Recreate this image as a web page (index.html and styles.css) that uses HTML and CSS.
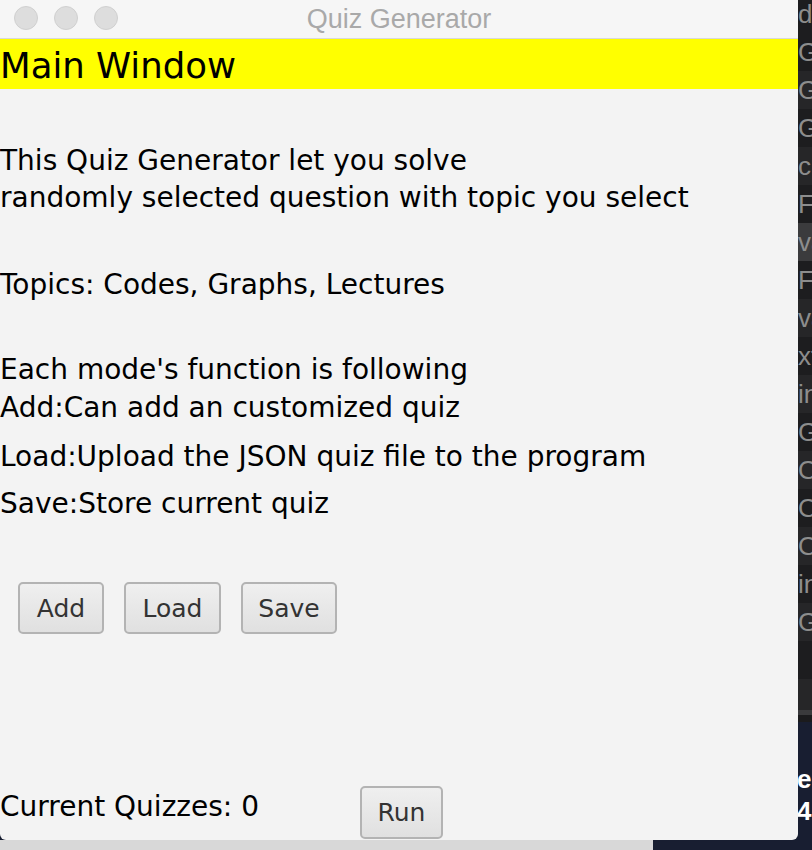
FILE: index.html
```html
<!DOCTYPE html>
<html>
<head>
<meta charset="utf-8">
<link rel="stylesheet" href="styles.css">
</head>
<body>
<div class="screen">
  <div class="left">
    <div class="window">
      <div class="titlebar">
        <div class="lights">
          <span class="light"></span><span class="light"></span><span class="light"></span>
        </div>
        <div class="title">Quiz Generator</div>
      </div>
      <div class="header">Main Window</div>
      <div class="content">
        <p class="intro">This Quiz Generator let you solve<br>randomly selected question with topic you select</p>
        <p class="topics">Topics: Codes, Graphs, Lectures</p>
        <p class="each">Each mode's function is following</p>
        <p class="mode m-add">Add:Can add an customized quiz</p>
        <p class="mode m-load">Load:Upload the JSON quiz file to the program</p>
        <p class="mode m-save">Save:Store current quiz</p>
        <div class="buttons">
          <button class="btn b-add">Add</button>
          <button class="btn b-load">Load</button>
          <button class="btn b-save">Save</button>
        </div>
        <div class="footer">
          <span class="count">Current Quizzes: 0</span>
          <button class="btn b-run">Run</button>
        </div>
      </div>
    </div>
    <div class="under"></div>
  </div>
  <div class="strip">
    <div class="rows">
      <div class="row">d</div>
      <div class="row">G</div>
      <div class="row alt">G</div>
      <div class="row">G</div>
      <div class="row alt">cı</div>
      <div class="row">F</div>
      <div class="row hl">va</div>
      <div class="row">F</div>
      <div class="row alt">va</div>
      <div class="row">xt</div>
      <div class="row alt">in</div>
      <div class="row">G</div>
      <div class="row alt">O</div>
      <div class="row">O</div>
      <div class="row alt">O</div>
      <div class="row">in</div>
      <div class="row alt">G</div>
      <div class="row"></div>
      <div class="row alt last"></div>
    </div>
    <div class="divider"></div>
    <div class="divider2"></div>
    <div class="desk">
      <div class="desk-t1">e</div>
      <div class="desk-t2">4.</div>
    </div>
  </div>
</div>
</body>
</html>
```
FILE: styles.css
```css
html, body {
  margin: 0;
  padding: 0;
}
body {
  width: 812px;
  height: 850px;
  overflow: hidden;
  background: #181e31;
}
.screen {
  display: flex;
  width: 812px;
  height: 850px;
}
.left {
  width: 798px;
  display: flex;
  flex-direction: column;
}
.window {
  width: 798px;
  height: 840px;
  background: #f3f3f3;
  border-radius: 0 0 6px 6px;
  display: flex;
  flex-direction: column;
  overflow: hidden;
  font-family: "DejaVu Sans", sans-serif;
  color: #000;
}
.titlebar {
  height: 38px;
  background: #f6f6f6;
  border-bottom: 1px solid #d8d8d8;
  display: flex;
  align-items: center;
  position: relative;
}
.lights {
  display: flex;
  gap: 16px;
  padding-left: 14px;
  margin-top: -2px;
}
.light {
  width: 24px;
  height: 24px;
  border-radius: 50%;
  background: #dddddd;
  border: 1px solid #d0d0d0;
  box-sizing: border-box;
}
.title {
  position: absolute;
  left: 0;
  right: 0;
  top: 0;
  bottom: 0;
  display: flex;
  align-items: center;
  justify-content: center;
  font-family: "Liberation Sans", sans-serif;
  font-size: 27px;
  color: #a9a9a9;
}
.header {
  height: 50px;
  background: #ffff00;
  font-size: 35.5px;
  line-height: 54px;
  white-space: nowrap;
}
.content {
  flex: 1;
  display: flex;
  flex-direction: column;
  font-size: 28px;
  line-height: 37px;
}
.content p {
  margin: 0;
  white-space: nowrap;
}
.content .intro { margin-top: 53px; }
.content .topics { margin-top: 50px; }
.content .each { margin-top: 48px; }
.content .m-add { margin-top: 1px; }
.content .m-load { margin-top: 12px; }
.content .m-save { margin-top: 10px; }
.buttons {
  display: flex;
  gap: 20px;
  margin-top: 60px;
  padding-left: 18px;
}
.btn {
  height: 52px;
  border: 2px solid #b3b3b3;
  border-radius: 5px;
  background: linear-gradient(#efefef, #e0e0e0);
  font-family: "DejaVu Sans", sans-serif;
  font-size: 25px;
  color: #333;
  padding: 0;
  box-sizing: border-box;
}
.b-add { width: 86px; }
.b-load { width: 97px; }
.b-save { width: 96px; }
.b-run { width: 83px; height: 53px; }
.footer {
  margin-top: auto;
  display: flex;
  align-items: center;
  padding-bottom: 1px;
}
.count {
  width: 360px;
  margin-bottom: 12px;
}
.under {
  width: 653px;
  flex: 1;
  background: #d8d8d8;
}
.strip {
  width: 14px;
  display: flex;
  flex-direction: column;
  overflow: hidden;
  font-family: "Liberation Sans", sans-serif;
}
.rows {
  margin-top: -5px;
}
.row {
  height: 38px;
  line-height: 38px;
  background: #1d1d1f;
  color: #8d8d8d;
  font-size: 26px;
  white-space: nowrap;
}
.row.alt { background: #262628; }
.row.hl { background: #3b3b3d; }
.row.last { height: 31px; }
.divider {
  height: 5px;
  background: #3a3a3c;
}
.divider2 {
  height: 7px;
  background: #1b1b1d;
}
.desk {
  flex: 1;
  background: #181e31;
  color: #fff;
  font-weight: bold;
  font-size: 26px;
  line-height: 32px;
  padding-top: 41px;
  margin-left: -1px;
}
```
